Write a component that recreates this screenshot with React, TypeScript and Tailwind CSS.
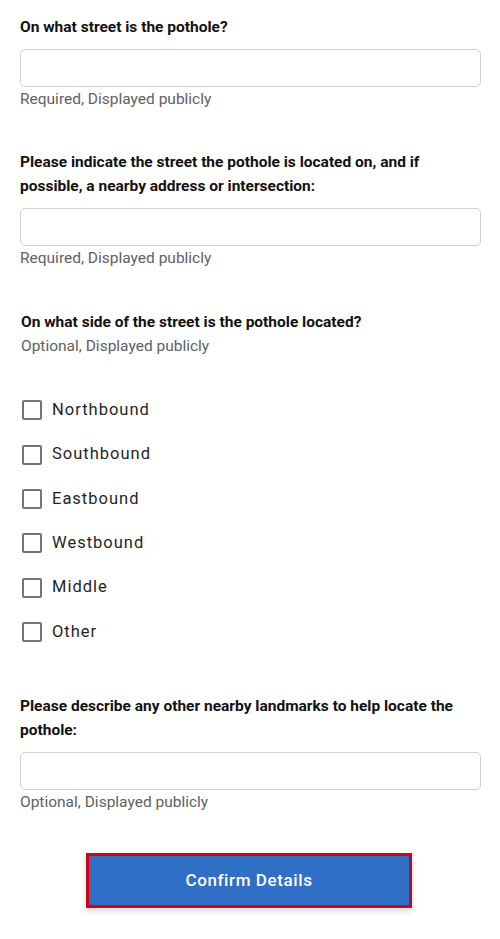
import React from "react";

function Field({ label, helper }: { label: React.ReactNode; helper: string }) {
  return (
    <div className="flex flex-col">
      <div className="text-[15.5px] leading-[24px] font-bold text-[#111]">{label}</div>
      <div className="mt-[10px] h-[38px] rounded-[5px] border border-[#cfcfd4] bg-white" />
      <div className="mt-[2px] text-[15.5px] leading-[20px] text-[#616161]">{helper}</div>
    </div>
  );
}

const options = ["Northbound", "Southbound", "Eastbound", "Westbound", "Middle", "Other"];

export default function App() {
  return (
    <div className="w-[500px] h-[939px] bg-white pl-[20px] pt-[15px] pr-[19px] flex flex-col" style={{ fontFamily: "Roboto, 'Liberation Sans', sans-serif" }}>
      <Field label="On what street is the pothole?" helper="Required, Displayed publicly" />
      <div className="mt-[41px]">
        <Field
          label="Please indicate the street the pothole is located on, and if possible, a nearby address or intersection:"
          helper="Required, Displayed publicly"
        />
      </div>
      <div className="mt-[42px] pl-[1px] flex flex-col">
        <div className="text-[15.5px] leading-[24px] font-bold text-[#111]">On what side of the street is the pothole located?</div>
        <div className="mt-[2px] text-[15.5px] leading-[20px] text-[#616161]">Optional, Displayed publicly</div>
      </div>
      <div className="mt-[32px] flex flex-col pl-[2px]">
        {options.map((o) => (
          <label key={o} className="h-[44.4px] flex items-center gap-[10px]">
            <span className="w-[20px] h-[20px] rounded-[2px] border-2 border-[#757575] bg-white shrink-0" />
            <span className="text-[16.5px] tracking-[1px] text-[#1f1f1f]">{o}</span>
          </label>
        ))}
      </div>
      <div className="mt-[40px]">
        <Field label="Please describe any other nearby landmarks to help locate the pothole:" helper="Optional, Displayed publicly" />
      </div>
      <div className="mt-[41px] flex">
        <button className="ml-[66px] w-[326px] h-[55px] bg-[#2f6fc6] border-[3px] border-[#d0021b] text-white text-[17px] font-medium tracking-[0.6px] shadow-[0_3px_6px_rgba(0,0,0,0.15)]">
          Confirm Details
        </button>
      </div>
    </div>
  );
}
